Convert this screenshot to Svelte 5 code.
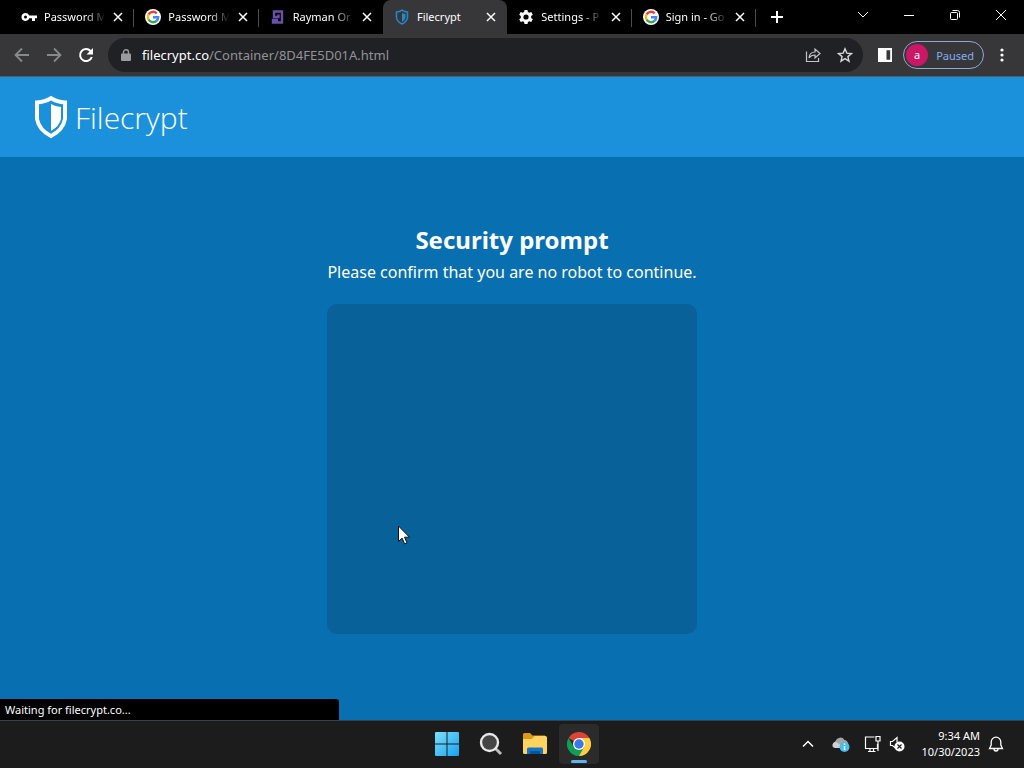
<script>
	let tabs = [
		{ id: 1, icon: 'key', title: 'Password M' },
		{ id: 2, icon: 'google', title: 'Password M' },
		{ id: 3, icon: 'rayman', title: 'Rayman Or' },
		{ id: 4, icon: 'shield', title: 'Filecrypt' },
		{ id: 5, icon: 'gear', title: 'Settings - P' },
		{ id: 6, icon: 'google', title: 'Sign in - Go' },
	];

	let active = 4;
	let address = '/Container/8D4FE5D01A.html';

	function close(tab) {
		tabs = tabs.filter(t => t !== tab);
	}
</script>

<div class="screen">
	<div class="tabstrip">
		<div class="tabs">
			{#each tabs as tab (tab.id)}
				<div class="tab" class:active={tab.id === active} class:before={tab.id === active - 1}>
					<svg class="favicon" width="16" height="16" viewBox="0 0 16 16">
						{#if tab.icon === 'key'}
							<path fill="#fff" fill-rule="evenodd" d="M4.5 4a4 4 0 1 0 3.8 5.2H11V12h3V9.2h2V6.4H8.2A4 4 0 0 0 4.500 4zm0 2.500a1.500 1.500 0 1 1 0 3 1.500 1.500 0 0 1 0-3z" />
						{:else if tab.icon === 'google'}
							<circle cx="8" cy="8" r="8" fill="#fff" />
							<g fill="none" stroke-width="2.400">
								<path stroke="#ea4335" d="M3.500 5.500A5.200 5.200 0 0 1 11.700 4.300" />
								<path stroke="#fbbc05" d="M3.500 10.500A5.200 5.200 0 0 1 3.500 5.500" />
								<path stroke="#34a853" d="M11.600 11.800A5.200 5.200 0 0 1 3.500 10.500" />
								<path stroke="#4285f4" d="M8 8.200h5.200a5.200 5.200 0 0 1-1.600 3.600" />
							</g>
						{:else if tab.icon === 'rayman'}
							<path fill="none" stroke="#6951a8" stroke-width="2.400" d="M8.500 5.500V8H4V2.500h8v11H3V11h5" />
						{:else if tab.icon === 'shield'}
							<path fill="none" stroke="#2588c9" stroke-width="1.500" d="M8 1.200Q10.500 3 13.500 3v5.500Q13 12.500 8 15 3 12.500 2.500 8.500V3Q5.500 3 8 1.200z" />
							<path fill="#2588c9" d="M8 4q2 1 3.500 1v3.500Q11 11.500 8 13z" />
						{:else}
							<path fill="#fff" fill-rule="evenodd" d="M6.500 1h3l.4 2 1.400.8 2-.7 1.500 2.600-1.600 1.400v1.800l1.600 1.400-1.500 2.600-2-.7-1.400.8-.4 2h-3l-.4-2-1.400-.8-2 .7-1.500-2.600 1.600-1.400V7.100L1.200 5.700l1.500-2.600 2 .7L6.100 3zM8 5.400a2.600 2.600 0 1 0 0 5.200 2.600 2.600 0 0 0 0-5.200z" />
						{/if}
					</svg>
					<span class="title">{tab.title}</span>
					<button class="close" aria-label="Close tab" on:click={() => close(tab)}>
						<svg width="10" height="10" viewBox="0 0 10 10"><path d="M1 1l8 8M9 1L1 9" stroke="#fff" stroke-width="1.500" /></svg>
					</button>
				</div>
			{/each}
		</div>
		<button class="newtab" aria-label="New tab">
			<svg width="12" height="12" viewBox="0 0 12 12"><path d="M6 0v12M0 6h12" stroke="#fff" stroke-width="2" /></svg>
		</button>
		<div class="controls">
			<button aria-label="Search tabs"><svg width="12" height="12" viewBox="0 0 12 12"><path d="M1 3l5 5 5-5" /></svg></button>
			<button aria-label="Minimize"><svg width="12" height="12" viewBox="0 0 12 12"><path d="M1 6.500h10" /></svg></button>
			<button aria-label="Restore"><svg width="12" height="12" viewBox="0 0 12 12"><rect x="1.500" y="3.500" width="7" height="7" rx="1" /><path d="M3.500 1.500h5a2 2 0 0 1 2 2v5" /></svg></button>
			<button aria-label="Close"><svg width="12" height="12" viewBox="0 0 12 12"><path d="M1 1l10 10M11 1L1 11" /></svg></button>
		</div>
	</div>

	<div class="toolbar">
		<button class="tool" aria-label="Back">
			<svg width="16" height="16" viewBox="0 0 16 16"><path fill="none" stroke="#88898b" stroke-width="1.800" d="M15 8H2M8 1.500L1.500 8 8 14.500" /></svg>
		</button>
		<button class="tool" aria-label="Forward">
			<svg width="16" height="16" viewBox="0 0 16 16"><path fill="none" stroke="#88898b" stroke-width="1.800" d="M1 8h13M8 1.500L14.500 8 8 14.500" /></svg>
		</button>
		<button class="tool" aria-label="Reload">
			<svg width="16" height="16" viewBox="0 0 16 16"><path fill="none" stroke="#fff" stroke-width="2" d="M13.800 10A6 6 0 1 1 12.500 4L14 5.500" /><path fill="#fff" d="M15 1v6.500H8.500z" /></svg>
		</button>
		<div class="omnibox">
			<svg width="10" height="12" viewBox="0 0 10 12"><rect y="4.500" width="10" height="7.500" rx="1" fill="#9a9b9e" /><path d="M2.500 5V3.200a2.500 2.500 0 0 1 5 0V5" fill="none" stroke="#9a9b9e" stroke-width="1.400" /></svg>
			<span class="url"><b>filecrypt.co</b>{address}</span>
			<button class="tool" aria-label="Share">
				<svg width="16" height="16" viewBox="0 0 16 16" fill="none" stroke="#c4c5c7" stroke-width="1.200"><path d="M1.500 4.500v10h12V11" /><path d="M4 11q.5-6 6-6V2l5 4.500-5 4.500V8Q6 8 4 11z" /></svg>
			</button>
			<button class="tool" aria-label="Bookmark">
				<svg width="16" height="16" viewBox="0 0 16 16"><path fill="none" stroke="#d6d7d9" stroke-width="1.400" d="M8 1.800l1.800 4.300 4.700.4-3.600 3.100 1.100 4.600L8 11.700l-4 2.500 1.100-4.600-3.600-3.100 4.700-.4z" /></svg>
			</button>
		</div>
		<button class="tool" aria-label="Side panel">
			<svg width="14" height="14" viewBox="0 0 14 14"><path fill="#fff" fill-rule="evenodd" d="M0 0h14v14H0zM8.500 2.200v9.600h3.700V2.200z" /></svg>
		</button>
		<button class="profile"><span class="avatar">a</span><span>Paused</span></button>
		<button class="tool" aria-label="Menu">
			<svg width="4" height="14" viewBox="0 0 4 14" fill="#fff"><circle cx="2" cy="2" r="1.600" /><circle cx="2" cy="7" r="1.600" /><circle cx="2" cy="12" r="1.600" /></svg>
		</button>
	</div>

	<header>
		<a class="logo" href="#home">
			<svg width="34" height="44" viewBox="0 0 34 44">
				<path fill="none" stroke="#fff" stroke-width="4" d="M17 3.200Q23 7.200 31 7.400V24Q29 35 17 41 5 35 3 24V7.400Q11 7.200 17 3.200z" />
				<path fill="#fff" d="M17 9q5 3 10 3v12q-1.500 7-10 12z" />
			</svg>
			<span>Filecrypt</span>
		</a>
	</header>

	<main>
		<h1>Security prompt</h1>
		<p>Please confirm that you are no robot to continue.</p>
		<div class="captcha"></div>
		<svg class="cursor" width="12" height="20" viewBox="0 0 12 20"><path fill="#fff" stroke="#111" d="M.5 1v15.500l3.600-3.400 2.500 5.800 2.400-1-2.500-5.700h5z" /></svg>
		<div class="status">Waiting for filecrypt.co...</div>
	</main>

	<footer>
		<div></div>
		<div class="apps">
			<button aria-label="Start">
				<svg width="24" height="24" viewBox="0 0 24 24">
					<linearGradient id="win" x2="1" y2="1" gradientUnits="objectBoundingBox"><stop stop-color="#7ce0fc" /><stop offset="1" stop-color="#17a1ef" /></linearGradient>
					<path fill="url(#win)" d="M1 0h10.500v11.500H0V1a1 1 0 0 1 1-1zM12.500 0H23a1 1 0 0 1 1 1v10.500H12.500zM0 12.500h11.500V24H1a1 1 0 0 1-1-1zM12.500 12.500H24V23a1 1 0 0 1-1 1H12.500z" />
				</svg>
			</button>
			<button aria-label="Search">
				<svg width="24" height="24" viewBox="0 0 24 24"><path d="M16 16l6 6" stroke="#bcbcbc" stroke-width="3" /><circle cx="10.500" cy="10.500" r="8.500" fill="#454545" stroke="#e8e8e8" stroke-width="2.400" /></svg>
			</button>
			<button aria-label="File Explorer">
				<svg width="24" height="24" viewBox="0 0 24 24">
					<path fill="#d99a18" d="M0 2.500Q0 1 1.500 1H7l2.500 2.500H22v6H0z" />
					<path fill="#ffd35c" d="M0 7h9l2.500-3H22.500A1.500 1.500 0 0 1 24 5.500V20.500a1.500 1.500 0 0 1-1.500 1.500H1.500A1.500 1.500 0 0 1 0 20.500z" />
					<path fill="#1276c8" d="M4 22v-5q0-1.500 1.500-1.500h13q1.500 0 1.500 1.500v5z" />
					<path fill="#075595" d="M7 19h10v3H7z" />
				</svg>
			</button>
			<button class="running" aria-label="Chrome">
				<svg width="24" height="24" viewBox="0 0 24 24">
					<path fill="#db4437" d="M12 12L1.600 6A12 12 0 0 1 22.400 6z" />
					<path fill="#ffcd40" d="M12 12V6h10.400A12 12 0 0 1 12 24z" />
					<path fill="#0f9d58" d="M12 12l5.200 3L12 24A12 12 0 0 1 1.600 6l5.200 9z" />
					<circle cx="12" cy="12" r="6" fill="#fff" /><circle cx="12" cy="12" r="4.700" fill="#3978e6" />
				</svg>
			</button>
		</div>
		<div class="tray">
			<svg width="12" height="16" viewBox="0 0 12 16"><path fill="none" stroke="#fff" stroke-width="1.500" d="M1 10.500l5-5 5 5" /></svg>
			<svg class="cloud" width="18" height="16" viewBox="0 0 18 16">
				<path fill="#a5a5a5" d="M4 12a4 4 0 0 1-.5-7A5 5 0 0 1 12.500 4 4 4 0 0 1 16 9l-4 3z" /><path fill="#d0d0d0" d="M3 12a3 3 0 0 1 1-6l5 3 2 3z" />
				<circle cx="12.500" cy="11" r="5" fill="#4abdea" /><path stroke="#fff" stroke-width="1.400" d="M12.500 10v4M12.500 7.500V9" />
			</svg>
			<svg width="17" height="18" viewBox="0 0 17 18" fill="none" stroke="#fff" stroke-width="1.200"><path d="M10.500 2h-9v11.500h12V9M4 16.500h7.500M6 13.500v3M9.500 13.500v3" /><path d="M12 1.500h4v4.500h-4zM14 6v10" /></svg>
			<svg width="16" height="16" viewBox="0 0 16 16"><path fill="none" stroke="#fff" stroke-width="1.200" d="M6.500 12L3.500 9.500H1.500v-4h2L8 1.500V6" /><circle cx="10.500" cy="10.500" r="5" fill="#fff" /><path stroke="#222" stroke-width="1.200" d="M8.500 8.500l4 4M12.500 8.500l-4 4" /></svg>
			<div class="clock"><span>9:34 AM</span><span>10/30/2023</span></div>
			<svg width="16" height="16" viewBox="0 0 16 16"><path fill="none" stroke="#fff" stroke-width="1.300" d="M1.500 12.500h13l-1.700-3.500V6a4.800 4.800 0 0 0-9.600 0v3zM6 13a2 2 0 0 0 4 0" /></svg>
		</div>
	</footer>
</div>

<style>
	:global(body) { margin: 0 }

	.screen {
		display: flex;
		flex-direction: column;
		min-height: 100vh;
		background: #086fb1;
		color: #fff;
		font-family: "Noto Sans", "Open Sans", sans-serif;
		font-size: 11px;
	}

	button {
		display: flex;
		align-items: center;
		justify-content: center;
		padding: 0;
		border: none;
		background: transparent;
		color: inherit;
		font: inherit;
	}

	svg { flex: none }

	.tabstrip {
		display: flex;
		height: 34px;
		padding-left: 10px;
		background: #000;
	}

	.tabs {
		display: flex;
		flex: 0 1 746px;
		min-width: 0;
	}

	.tab {
		position: relative;
		display: flex;
		flex: 1;
		align-items: center;
		min-width: 0;
		box-sizing: border-box;
		padding: 0 8px 0 11px;
	}

	.tab::after {
		content: "";
		position: absolute;
		right: 0;
		top: 9px;
		width: 1px;
		height: 18px;
		background: #4c4c4c;
	}

	.tab.active {
		border-radius: 8px 8px 0 0;
		background: #37373a;
	}

	.tab.active::after, .tab.before::after { display: none }

	.title {
		flex: 1;
		min-width: 0;
		margin-left: 7px;
		white-space: nowrap;
		line-height: 16px;
		mask-image: linear-gradient(to right, #000 40px, transparent 62px);
	}

	.active .title { mask-image: none }

	.close {
		width: 16px;
		height: 16px;
		margin-left: 6px;
	}

	.newtab {
		width: 28px;
		margin-left: 7px;
	}

	.controls {
		display: flex;
		height: 29px;
		margin-left: auto;
	}

	.controls button { width: 46px }

	.controls svg {
		fill: none;
		stroke: #fff;
		stroke-width: 1;
	}

	.toolbar {
		display: flex;
		align-items: center;
		gap: 4px;
		height: 42px;
		padding: 0 8px;
		border-bottom: 1px solid #4a6070;
		background: #37373a;
	}

	.tool {
		flex: none;
		width: 28px;
		height: 28px;
	}

	.omnibox {
		display: flex;
		flex: 1;
		align-items: center;
		gap: 4px;
		height: 34px;
		margin: 0 4px;
		padding: 0 4px 0 13px;
		border-radius: 17px;
		background: #202124;
		box-sizing: border-box;
	}

	.url {
		flex: 1;
		margin-left: 7px;
		color: #929396;
		font-size: 13px;
	}

	.url b {
		color: #fff;
		font-weight: 400;
	}

	.profile {
		gap: 8px;
		height: 28px;
		padding: 0 9px 0 2px;
		border: 1px solid #8fa9d0;
		border-radius: 14px;
		color: #86adf0;
		box-sizing: border-box;
	}

	.avatar {
		width: 22px;
		border-radius: 50%;
		background: #cb1765;
		color: #fff;
		line-height: 22px;
	}

	header {
		display: flex;
		align-items: center;
		height: 80px;
		padding: 0 34px;
		background: #1c91db;
	}

	.logo {
		display: flex;
		align-items: center;
		gap: 7px;
		color: #fff;
		font-family: "Open Sans", sans-serif;
		font-size: 30px;
		font-weight: 300;
		text-decoration: none;
	}

	main {
		position: relative;
		display: flex;
		flex: 1;
		flex-direction: column;
		align-items: center;
		padding-top: 67px;
	}

	h1 {
		margin: 0;
		font-size: 24px;
		line-height: 32px;
	}

	p {
		margin: 4px 0 20px;
		font-size: 16px;
		line-height: 24px;
	}

	.captcha {
		width: 370px;
		height: 330px;
		border-radius: 10px;
		background: #096199;
	}

	.cursor {
		position: absolute;
		left: 398px;
		top: 368px;
	}

	.status {
		position: absolute;
		left: 0;
		bottom: 0;
		width: 339px;
		padding-left: 5px;
		border-radius: 0 3px 0 0;
		background: #000;
		box-sizing: border-box;
		line-height: 21px;
	}

	footer {
		display: grid;
		grid-template-columns: 1fr auto 1fr;
		height: 45px;
		padding: 0 0 2px 1px;
		border-top: 1px solid #3a4045;
		background: #1c1c1c;
	}

	.apps {
		display: flex;
		align-items: center;
		gap: 4px;
	}

	.apps button {
		position: relative;
		width: 40px;
		height: 40px;
	}

	.apps .running {
		border-radius: 4px;
		background: #2b2b2b;
	}

	.running::after {
		content: "";
		position: absolute;
		bottom: 1px;
		width: 16px;
		height: 3px;
		border-radius: 2px;
		background: #5eb4ef;
	}

	.tray {
		display: flex;
		align-items: center;
		justify-content: flex-end;
		gap: 8px;
		padding-right: 20px;
	}

	.cloud { margin: 0 6px 0 10px }

	.clock {
		display: flex;
		flex-direction: column;
		margin-left: 8px;
		text-align: right;
		line-height: 16px;
	}
</style>
